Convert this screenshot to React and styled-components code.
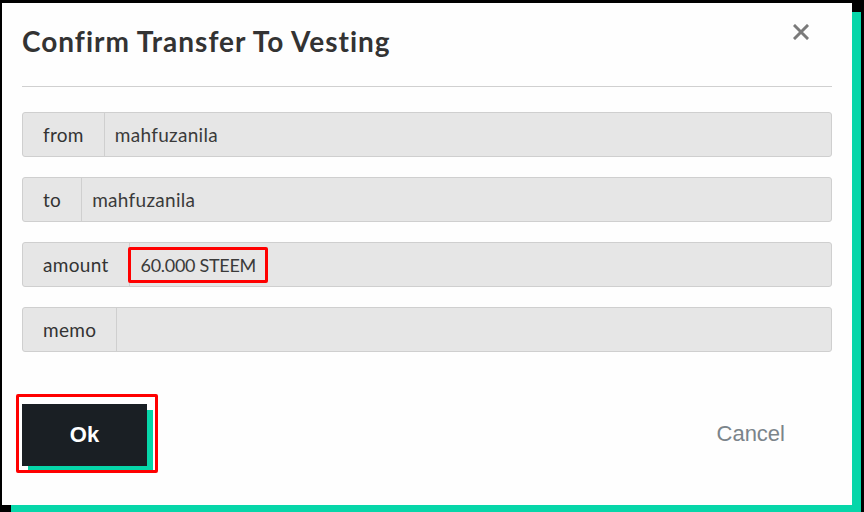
import React from "react";
import styled, { createGlobalStyle } from "styled-components";

const Global = createGlobalStyle`
  html, body { margin: 0; padding: 0; background: #000; }
  body { width: 864px; height: 512px; overflow: hidden; }
  #root { padding: 3px 0 0 2px; }
`;

const Modal = styled.div`
  width: 850px;
  height: 502px;
  box-sizing: border-box;
  background: #fefefe;
  box-shadow: 9px 9px 0 #06d6a9;
  padding: 0 20px;
  display: flex;
  flex-direction: column;
`;

const Header = styled.div`
  display: flex;
  justify-content: space-between;
  align-items: flex-start;
  padding: 20px 0 27px;
  border-bottom: 1px solid #d0d0d0;
`;

const Title = styled.h1`
  margin: 0;
  font-family: Lato, "Open Sans", sans-serif;
  font-weight: 700;
  font-size: 28px;
  letter-spacing: 1px;
  line-height: 36px;
  color: #333;
`;

const Close = styled.button`
  border: 0;
  background: none;
  padding: 0;
  margin: 1px 23px 0 0;
  width: 16px;
  height: 16px;
  display: flex;
`;

const Fields = styled.div`
  display: flex;
  flex-direction: column;
  gap: 20px;
  margin-top: 25px;
`;

const Row = styled.div`
  display: flex;
  height: 45px;
  box-sizing: border-box;
  border: 1px solid #cfcfcf;
  border-radius: 3px;
  background: #e6e6e6;
  font-family: Lato, "Open Sans", sans-serif;
  font-size: 19px;
  letter-spacing: 0.3px;
  color: #333;
`;

const Label = styled.div`
  display: flex;
  align-items: center;
  padding: 0 20px 0 20px;
  border-right: 1px solid #cfcfcf;
`;

const Value = styled.div`
  flex: 1;
  display: flex;
  align-items: center;
  padding-left: 10px;
  color: #3a3a3a;
`;

const Marked = styled.span`
  display: inline-flex;
  align-items: center;
  height: 36px;
  box-sizing: border-box;
  margin-left: -12px;
  padding: 0 9px 0 10px;
  border: 3px solid #f00;
  border-radius: 2px;
  font-size: 18px;
  letter-spacing: -0.3px;
`;

const Footer = styled.div`
  display: flex;
  justify-content: space-between;
  align-items: center;
  margin-top: 42px;
`;

const OkMark = styled.div`
  margin-left: -6px;
  width: 142px;
  height: 79px;
  box-sizing: border-box;
  border: 3px solid #f00;
  border-radius: 2px;
  padding: 7px 0 0 3px;
  overflow: hidden;
  background: #fff;
`;

const OkButton = styled.button`
  width: 125px;
  height: 62px;
  border: 0;
  background: #1a1f24;
  color: #fff;
  font-family: "Liberation Sans", Arial, sans-serif;
  font-weight: 700;
  font-size: 22px;
  box-shadow: 6px 6px 0 #06d6a9;
  padding: 0;
`;

const CancelButton = styled.button`
  border: 0;
  background: none;
  padding: 0;
  margin-right: 47px;
  font-family: "Liberation Sans", Arial, sans-serif;
  font-size: 22px;
  color: #7b848a;
`;

const fields = [
  { label: "from", value: "mahfuzanila" },
  { label: "to", value: "mahfuzanila" },
  { label: "amount", value: "60.000 STEEM", marked: true },
  { label: "memo", value: "" },
];

export default function App() {
  return (
    <>
      <Global />
      <Modal>
        <Header>
          <Title>Confirm Transfer To Vesting</Title>
          <Close aria-label="close">
            <svg width="16" height="16" viewBox="0 0 16 16">
              <path d="M2 2 L14 14 M14 2 L2 14" stroke="#7a7a7a" strokeWidth="3" strokeLinecap="square" />
            </svg>
          </Close>
        </Header>
        <Fields>
          {fields.map((f) => (
            <Row key={f.label}>
              <Label>{f.label}</Label>
              <Value>{f.marked ? <Marked>{f.value}</Marked> : f.value}</Value>
            </Row>
          ))}
        </Fields>
        <Footer>
          <OkMark>
            <OkButton>Ok</OkButton>
          </OkMark>
          <CancelButton>Cancel</CancelButton>
        </Footer>
      </Modal>
    </>
  );
}
